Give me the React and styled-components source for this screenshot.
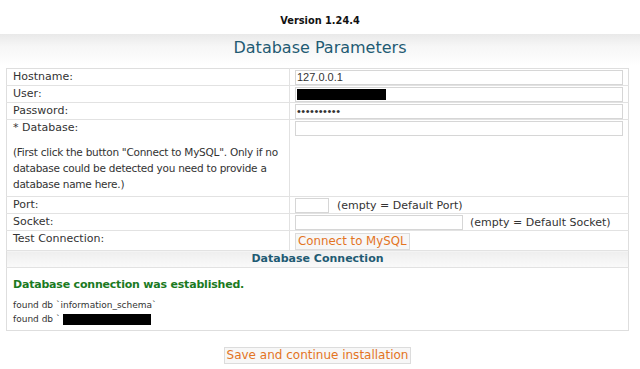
import React from "react";
import styled, { createGlobalStyle } from "styled-components";

const GlobalStyle = createGlobalStyle`
  html, body {
    margin: 0;
    padding: 0;
    background: #fff;
  }
  body {
    font-family: "DejaVu Sans", Verdana, sans-serif;
    font-size: 11px;
    color: #333;
  }
`;

const Page = styled.div`
  width: 640px;
  height: 369px;
  overflow: hidden;
`;

const Version = styled.div`
  text-align: center;
  font-weight: bold;
  font-size: 9.8px;
  color: #111;
  padding-top: 15px;
  height: 19px;
`;

const Band = styled.div`
  background: linear-gradient(to bottom, #e9e9e9 0px, #f6f6f6 12px, #ffffff 32px);
  padding: 4px 6px 0 6px;
`;

const Title = styled.h1`
  margin: 0;
  text-align: center;
  font-weight: normal;
  font-size: 16px;
  color: #1f5b73;
  height: 30px;
  line-height: 20px;
`;

const Table = styled.table`
  width: 623px;
  border-collapse: collapse;
  border: 1px solid #dedede;
`;

const Row = styled.tr`
  border-bottom: 1px solid #e2e2e2;
`;

const Label = styled.td`
  width: 270px;
  padding: ${(p) => (p.$tall ? "0 6px 4px 6px" : "0 6px")};
  height: ${(p) => p.$h || 16}px;
  vertical-align: top;
  line-height: 16px;
  color: #333;
  border-right: 1px solid #e2e2e2;
`;

const Hint = styled.div`
  margin-top: 8px;
  line-height: 16px;
  font-size: 10.5px;
  letter-spacing: -0.25px;
`;

const Field = styled.td`
  padding: 1px 5px 0 5px;
  vertical-align: top;
  white-space: nowrap;
`;

const Input = styled.div`
  box-sizing: border-box;
  display: inline-block;
  vertical-align: top;
  width: ${(p) => p.$w || 328}px;
  height: 15px;
  border: 1px solid #d6d6d6;
  font-family: "Liberation Sans", Arial, sans-serif;
  font-size: 11px;
  line-height: 13px;
  padding: 0 1px;
  color: #333;
  letter-spacing: ${(p) => (p.$dots ? "0.5px" : "0")};
`;

const Redacted = styled.div`
  width: ${(p) => p.$w}px;
  height: ${(p) => p.$h}px;
  background: #000;
  display: inline-block;
  vertical-align: top;
`;

const Note = styled.span`
  display: inline-block;
  margin-left: ${(p) => p.$gap || 8}px;
  line-height: 15px;
  color: #333;
`;

const OrangeButton = styled.button`
  font-family: "DejaVu Sans", Verdana, sans-serif;
  font-size: ${(p) => p.$size || 11.8}px;
  color: #e3741f;
  background: #f7f7f7;
  border: 1px solid #dcdcdc;
  border-radius: 0;
  padding: 0 2px;
  margin: 0;
  line-height: 15px;
  cursor: pointer;
`;

const SectionHead = styled.td`
  text-align: center;
  font-weight: bold;
  color: #1f5b73;
  height: 16px;
  padding: 0;
  line-height: 16px;
  background: linear-gradient(to bottom, #eeeeee, #fafafa);
`;

const Result = styled.td`
  padding: 9px 6px 4px 6px;
  height: 49px;
  vertical-align: top;
`;

const Success = styled.div`
  color: #1b7a1f;
  font-weight: bold;
  font-size: 11px;
  letter-spacing: -0.2px;
  line-height: 16px;
  margin-bottom: 5px;
`;

const Found = styled.div`
  font-size: 9px;
  line-height: 14px;
  color: #333;
  display: flex;
  align-items: center;
`;

const Footer = styled.div`
  display: flex;
  justify-content: center;
  padding-top: 16px;
  padding-right: 5px;
`;

export default function App() {
  return (
    <Page>
      <GlobalStyle />
      <Version>Version 1.24.4</Version>
      <Band>
        <Title>Database Parameters</Title>
        <Table>
          <tbody>
            <Row>
              <Label>Hostname:</Label>
              <Field>
                <Input>127.0.0.1</Input>
              </Field>
            </Row>
            <Row>
              <Label>User:</Label>
              <Field>
                <Input style={{ padding: 1 }}>
                  <Redacted $w={89} $h={11} />
                </Input>
              </Field>
            </Row>
            <Row>
              <Label>Password:</Label>
              <Field>
                <Input $dots>••••••••••</Input>
              </Field>
            </Row>
            <Row>
              <Label $tall $h={72}>
                * Database:
                <Hint>
                  (First click the button "Connect to MySQL". Only if no
                  database could be detected you need to provide a database
                  name here.)
                </Hint>
              </Label>
              <Field>
                <Input />
              </Field>
            </Row>
            <Row>
              <Label>Port:</Label>
              <Field>
                <Input $w={34} />
                <Note>(empty = Default Port)</Note>
              </Field>
            </Row>
            <Row>
              <Label>Socket:</Label>
              <Field>
                <Input $w={168} />
                <Note $gap={7}>(empty = Default Socket)</Note>
              </Field>
            </Row>
            <Row>
              <Label $h={17}>Test Connection:</Label>
              <Field>
                <OrangeButton style={{ marginTop: 1 }}>Connect to MySQL</OrangeButton>
              </Field>
            </Row>
            <Row>
              <SectionHead colSpan={2}>Database Connection</SectionHead>
            </Row>
            <tr>
              <Result colSpan={2}>
                <Success>Database connection was established.</Success>
                <Found>found db `information_schema`</Found>
                <Found>
                  found db `&nbsp;
                  <Redacted $w={88} $h={11} />
                </Found>
              </Result>
            </tr>
          </tbody>
        </Table>
      </Band>
      <Footer>
        <OrangeButton $size={12}>Save and continue installation</OrangeButton>
      </Footer>
    </Page>
  );
}
